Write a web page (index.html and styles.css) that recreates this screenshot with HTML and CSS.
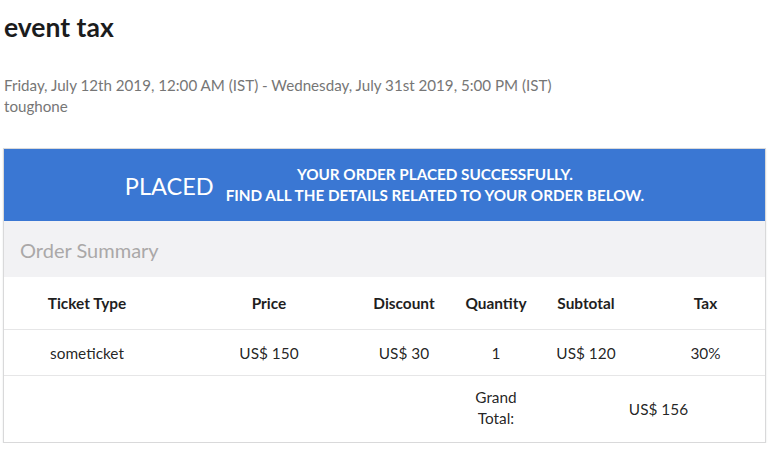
FILE: index.html
```html
<!DOCTYPE html>
<html lang="en">
<head>
    <meta charset="UTF-8">
    <meta name="viewport" content="width=device-width, initial-scale=1.0">
    <title>event tax - order</title>
    <link rel="stylesheet" href="styles.css">
</head>
<body>
    <div class="container">
        <h1 class="event-title">event tax</h1>
        <div class="event-meta">
            <div>Friday, July 12th 2019, 12:00 AM (IST) - Wednesday, July 31st 2019, 5:00 PM (IST)</div>
            <div>toughone</div>
        </div>

        <div class="order-card">
            <div class="order-status">
                <span class="status-label">PLACED</span>
                <span class="status-text">YOUR ORDER PLACED SUCCESSFULLY.<br>FIND ALL THE DETAILS RELATED TO YOUR ORDER BELOW.</span>
            </div>
            <div class="order-summary-title">Order Summary</div>
            <table class="order-table">
                <colgroup>
                    <col class="col-type">
                    <col class="col-price">
                    <col class="col-discount">
                    <col class="col-qty">
                    <col class="col-subtotal">
                    <col class="col-tax">
                </colgroup>
                <thead>
                    <tr>
                        <th>Ticket Type</th>
                        <th>Price</th>
                        <th>Discount</th>
                        <th>Quantity</th>
                        <th class="subtotal">Subtotal</th>
                        <th class="tax">Tax</th>
                    </tr>
                </thead>
                <tbody>
                    <tr>
                        <td>someticket</td>
                        <td>US$ 150</td>
                        <td>US$ 30</td>
                        <td>1</td>
                        <td class="subtotal">US$ 120</td>
                        <td class="tax">30%</td>
                    </tr>
                    <tr class="total-row">
                        <td colspan="3"></td>
                        <td><span class="grand-label">Grand Total:</span></td>
                        <td colspan="2">US$ 156</td>
                    </tr>
                </tbody>
            </table>
        </div>
    </div>
</body>
</html>
```

FILE: styles.css
```css
body {
    font-family: Lato, 'Open Sans', sans-serif;
    font-size: 14px;
    color: rgba(0, 0, 0, 0.87);
    background: #fff;
    margin: 0;
}
.container {
    padding: 0 2px 0 3px;
}
.event-title {
    font-size: 26.5px;
    font-weight: bold;
    line-height: 32px;
    margin: 0;
    padding: 11px 0 0 1px;
    color: #1b1c1d;
}
.event-meta {
    margin-top: 32px;
    padding-left: 1px;
    font-size: 15.15px;
    line-height: 21px;
    color: #767676;
}
.order-card {
    margin-top: 31px;
    border: 1px solid #d9d9da;
    box-shadow: 0 1px 2px rgba(34, 36, 38, 0.1);
}
.order-status {
    background: #3a77d3;
    color: #fff;
    height: 72px;
    display: flex;
    align-items: center;
    justify-content: center;
    gap: 12px;
}
.status-label {
    font-size: 23.5px;
    padding-top: 1px;
}
.status-text {
    font-size: 15.25px;
    font-weight: bold;
    line-height: 21px;
    text-align: center;
}
.order-summary-title {
    background: #f2f2f4;
    height: 56px;
    line-height: 58px;
    padding-left: 16px;
    font-size: 20px;
    color: #aaa8a8;
}
.order-table {
    width: 100%;
    table-layout: fixed;
    border-collapse: collapse;
    font-size: 15.4px;
}
.col-type { width: 166px; }
.col-price { width: 198px; }
.col-discount { width: 72px; }
.col-qty { width: 112px; }
.col-subtotal { width: 94px; }
.order-table th,
.order-table td {
    text-align: center;
    padding: 0;
    border-top: 1px solid #e6e6e7;
}
.order-table th {
    height: 52px;
    border-top: none;
    font-weight: bold;
    color: #1f1f1f;
}
.order-table td {
    height: 45px;
}
.order-table .subtotal {
    padding-right: 26px;
}
.order-table .total-row td {
    height: 66px;
    line-height: 21px;
}
.grand-label {
    display: inline-block;
    width: 50px;
    padding-bottom: 2px;
}
```
